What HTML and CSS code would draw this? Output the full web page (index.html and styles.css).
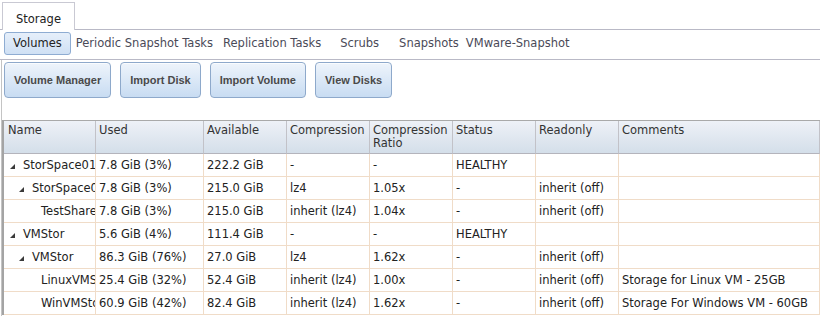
FILE: index.html
```html
<!DOCTYPE html>
<html lang="en">
<head>
    <meta charset="UTF-8">
    <title>Storage</title>
    <link rel="stylesheet" href="styles.css">
</head>
<body>
    <div class="tabbar">
        <div class="tab">Storage</div>
    </div>

    <div class="subnav">
        <span class="subtab active">Volumes</span>
        <span class="subtab">Periodic Snapshot Tasks</span>
        <span class="subtab">Replication Tasks</span>
        <span class="subtab scrubs">Scrubs</span>
        <span class="subtab snaps">Snapshots</span>
        <span class="subtab vmware">VMware-Snapshot</span>
    </div>

    <div class="pane">
        <div class="toolbar">
            <button class="btn">Volume Manager</button>
            <button class="btn">Import Disk</button>
            <button class="btn">Import Volume</button>
            <button class="btn">View Disks</button>
        </div>

        <div class="grid">
            <div class="row head">
                <div class="cell">Name</div>
                <div class="cell">Used</div>
                <div class="cell">Available</div>
                <div class="cell">Compression</div>
                <div class="cell">Compression Ratio</div>
                <div class="cell">Status</div>
                <div class="cell">Readonly</div>
                <div class="cell">Comments</div>
            </div>

            <div class="row">
                <div class="cell name lvl1"><span class="exp"><svg width="5" height="5" viewBox="0 0 5 5"><polygon points="5,0 5,5 0,5"/></svg></span>StorSpace01</div>
                <div class="cell">7.8 GiB (3%)</div>
                <div class="cell">222.2 GiB</div>
                <div class="cell">-</div>
                <div class="cell">-</div>
                <div class="cell">HEALTHY</div>
                <div class="cell"></div>
                <div class="cell"></div>
            </div>

            <div class="row">
                <div class="cell name lvl2"><span class="exp"><svg width="5" height="5" viewBox="0 0 5 5"><polygon points="5,0 5,5 0,5"/></svg></span>StorSpace01</div>
                <div class="cell">7.8 GiB (3%)</div>
                <div class="cell">215.0 GiB</div>
                <div class="cell">lz4</div>
                <div class="cell">1.05x</div>
                <div class="cell">-</div>
                <div class="cell">inherit (off)</div>
                <div class="cell"></div>
            </div>

            <div class="row">
                <div class="cell name lvl3"><span class="exp"></span>TestShare</div>
                <div class="cell">7.8 GiB (3%)</div>
                <div class="cell">215.0 GiB</div>
                <div class="cell">inherit (lz4)</div>
                <div class="cell">1.04x</div>
                <div class="cell">-</div>
                <div class="cell">inherit (off)</div>
                <div class="cell"></div>
            </div>

            <div class="row">
                <div class="cell name lvl1"><span class="exp"><svg width="5" height="5" viewBox="0 0 5 5"><polygon points="5,0 5,5 0,5"/></svg></span>VMStor</div>
                <div class="cell">5.6 GiB (4%)</div>
                <div class="cell">111.4 GiB</div>
                <div class="cell">-</div>
                <div class="cell">-</div>
                <div class="cell">HEALTHY</div>
                <div class="cell"></div>
                <div class="cell"></div>
            </div>

            <div class="row">
                <div class="cell name lvl2"><span class="exp"><svg width="5" height="5" viewBox="0 0 5 5"><polygon points="5,0 5,5 0,5"/></svg></span>VMStor</div>
                <div class="cell">86.3 GiB (76%)</div>
                <div class="cell">27.0 GiB</div>
                <div class="cell">lz4</div>
                <div class="cell">1.62x</div>
                <div class="cell">-</div>
                <div class="cell">inherit (off)</div>
                <div class="cell"></div>
            </div>

            <div class="row">
                <div class="cell name lvl3"><span class="exp"></span>LinuxVMStor</div>
                <div class="cell">25.4 GiB (32%)</div>
                <div class="cell">52.4 GiB</div>
                <div class="cell">inherit (lz4)</div>
                <div class="cell">1.00x</div>
                <div class="cell">-</div>
                <div class="cell">inherit (off)</div>
                <div class="cell">Storage for Linux VM - 25GB</div>
            </div>

            <div class="row">
                <div class="cell name lvl3"><span class="exp"></span>WinVMStor</div>
                <div class="cell">60.9 GiB (42%)</div>
                <div class="cell">82.4 GiB</div>
                <div class="cell">inherit (lz4)</div>
                <div class="cell">1.62x</div>
                <div class="cell">-</div>
                <div class="cell">inherit (off)</div>
                <div class="cell">Storage For Windows VM - 60GB</div>
            </div>
        </div>
    </div>
</body>
</html>
```

FILE: styles.css
```css
body {
    margin: 0;
    width: 820px;
    height: 316px;
    overflow: hidden;
    font-family: 'DejaVu Sans', Verdana, sans-serif;
    font-size: 11.5px;
    color: #222;
    background-color: white;
}

/* top tab */
.tabbar {
    height: 29px;
    border-bottom: 1px solid #b9b9c6;
    display: flex;
    align-items: flex-end;
    padding-left: 2px;
}

.tab {
    height: 28px;
    margin-bottom: -1px;
    padding: 4px 13px 0 13px;
    box-sizing: border-box;
    display: flex;
    align-items: center;
    border: 1px solid #c9c9d3;
    border-bottom: none;
    background-color: white;
    color: #222;
}

/* sub navigation */
.subnav {
    height: 30px;
    box-sizing: border-box;
    border-bottom: 1px solid #b9b9c6;
    display: flex;
    align-items: flex-start;
    padding: 2px 0 0 4px;
}

.subtab {
    line-height: 23px;
    padding: 0 5px;
    color: #4a4a58;
}

.subtab.active {
    line-height: 21px;
    padding: 0 8px;
    border: 1px solid #8eacd2;
    border-radius: 3px;
    background: linear-gradient(#e6effa, #cfe0f4);
    color: #222;
}

.subtab.scrubs {
    margin-left: 9px;
}

.subtab.snaps {
    margin-left: 10px;
}

.subtab.vmware {
    margin-left: -3px;
}

/* content pane */
.pane {
    margin-left: 1px;
    border-left: 1px solid #c4c4c4;
    height: 256px;
}

.toolbar {
    display: flex;
    gap: 9px;
    padding: 2px 0 0 2px;
}

.btn {
    height: 36px;
    padding: 0 9px;
    font-family: 'Liberation Sans', Arial, sans-serif;
    font-size: 11px;
    font-weight: bold;
    color: #4a4a4a;
    border: 1px solid #8ea9cb;
    border-radius: 4px;
    background: linear-gradient(#eef4fb, #c8dcf2);
    box-shadow: inset 0 1px 0 rgba(255,255,255,0.7);
}

/* volumes grid */
.grid {
    margin-top: 22px;
    border-top: 1px solid #a9a9a9;
    border-left: 2px solid #a4a4a4;
}

.row {
    display: grid;
    grid-template-columns: 92px 108px 83px 83px 83px 83px 83px 1fr;
    height: 23px;
}

.cell {
    box-sizing: border-box;
    border-right: 1px solid #f0dcc8;
    border-bottom: 1px solid #f0dcc8;
    padding: 0 3px;
    line-height: 22px;
    white-space: nowrap;
    overflow: hidden;
}

.row.head {
    height: 33px;
    background: linear-gradient(#eef1f7, #d3dee9);
}

.head .cell {
    border-right-color: #c2c2c8;
    border-bottom-color: #b4b4bc;
    line-height: 13px;
    padding-top: 3px;
    white-space: normal;
    color: #333;
}

.head .cell:first-child {
    padding-left: 4px;
}

.name.lvl1 { padding-left: 5px; }
.name.lvl2 { padding-left: 14px; }
.name.lvl3 { padding-left: 23px; }

.exp {
    display: inline-block;
    width: 14px;
}

.exp svg {
    margin-left: 1px;
    fill: #3a3a3a;
}
```
